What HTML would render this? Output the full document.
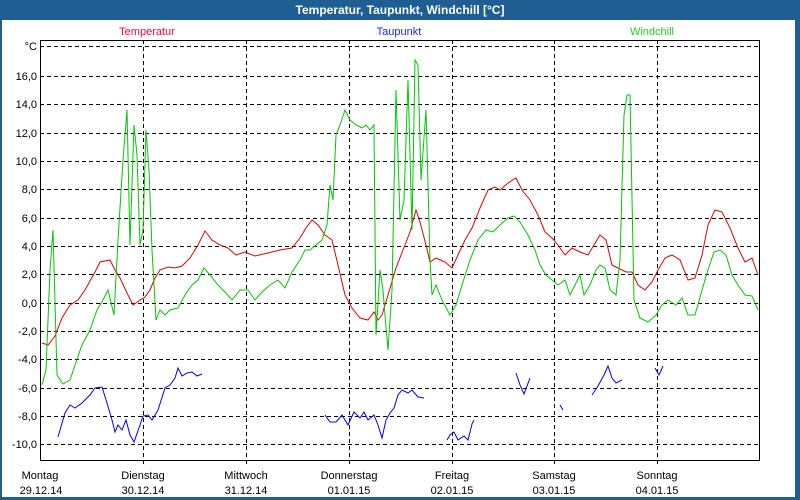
<!DOCTYPE html>
<html><head><meta charset="utf-8"><style>
body{margin:0;width:800px;height:500px;overflow:hidden;background:#1e5e93;font-family:"Liberation Sans",sans-serif}
#w{position:absolute;left:2px;top:20px;width:793px;height:477px;background:#fff}
#t{position:absolute;left:0;top:0;width:800px;height:20px;line-height:20px;text-align:center;color:#fff;font-weight:bold;font-size:12px}
text{font-family:"Liberation Sans",sans-serif;font-size:11px}
</style></head><body>
<div id="t">Temperatur, Taupunkt, Windchill [°C]</div>
<div id="w"></div>
<svg width="800" height="500" style="position:absolute;left:0;top:0">
<g stroke="#000" stroke-dasharray="4,3" stroke-width="1" fill="none">
<path d="M40 46.5H760M40 76.5H760M40 104.5H760M40 133.5H760M40 161.5H760M40 189.5H760M40 218.5H760M40 246.5H760M40 274.5H760M40 303.5H760M40 331.5H760M40 359.5H760M40 388.5H760M40 416.5H760M40 444.5H760"/>
<path d="M143.5 40V466M246.5 40V466M349.5 40V466M452.5 40V466M554.5 40V466M657.5 40V466"/>
</g>
<rect x="40.5" y="40.5" width="719" height="420" fill="none" stroke="#000"/>
<g font-size="11" text-anchor="end" fill="#000">
<text x="37" y="50">°C</text><text x="37" y="80">16,0</text><text x="37" y="108">14,0</text><text x="37" y="137">12,0</text><text x="37" y="165">10,0</text><text x="37" y="193">8,0</text><text x="37" y="222">6,0</text><text x="37" y="250">4,0</text><text x="37" y="278">2,0</text><text x="37" y="307">0,0</text><text x="37" y="335">-2,0</text><text x="37" y="363">-4,0</text><text x="37" y="392">-6,0</text><text x="37" y="420">-8,0</text><text x="37" y="448">-10,0</text>
</g>
<g text-anchor="middle" fill="#000">
<text x="40" y="479">Montag</text><text x="41" y="494">29.12.14</text>
<text x="143" y="479">Dienstag</text><text x="143" y="494">30.12.14</text>
<text x="246" y="479">Mittwoch</text><text x="246" y="494">31.12.14</text>
<text x="349" y="479">Donnerstag</text><text x="349" y="494">01.01.15</text>
<text x="452" y="479">Freitag</text><text x="452" y="494">02.01.15</text>
<text x="554" y="479">Samstag</text><text x="554" y="494">03.01.15</text>
<text x="657" y="479">Sonntag</text><text x="657" y="494">04.01.15</text>
<text x="147" y="35" fill="#ff0040">Temperatur</text>
<text x="399" y="35" fill="#2020ff">Taupunkt</text>
<text x="652" y="35" fill="#20d020">Windchill</text>
</g>
<polyline fill="none" stroke="#e00000" points="42,343 48,345 55,336 62,318 70,305 78,300 85,290 95,272 100,262 110,260 115,270 120,278 127,293 133,305 140,300 145,297 150,290 155,278 160,270 168,267 175,268 182,266 190,258 198,245 205,231 212,240 220,245 228,248 236,255 245,252 255,256 268,253 280,250 292,248 300,238 306,228 312,220 318,225 325,235 332,240 338,265 345,295 352,308 360,318 368,320 374,312 378,320 382,315 388,295 396,268 403,250 410,232 416,210 420,222 426,245 430,262 436,258 445,262 452,268 458,255 465,240 472,228 480,208 488,190 495,187 500,190 508,183 516,178 522,190 530,200 538,215 545,232 552,238 558,245 565,255 572,248 580,252 588,255 594,245 600,235 606,240 612,265 618,268 626,272 632,272 638,285 645,290 652,282 658,270 665,258 672,255 680,260 688,280 695,278 702,255 708,225 715,210 722,212 730,228 738,248 745,262 752,258 758,275"/>
<polyline fill="none" stroke="#00c800" points="42,385 46,370 50,270 53,230 57,375 63,384 70,380 75,365 82,345 90,330 97,310 103,300 108,290 114,315 118,240 123,160 127,110 130,245 134,125 137,155 140,245 143,230 146,130 149,170 152,250 156,320 160,310 165,315 170,310 178,308 185,295 192,285 198,280 204,268 210,275 218,285 225,292 232,300 240,290 248,290 255,300 262,292 270,285 278,280 285,288 292,272 300,260 305,250 310,250 316,245 322,240 327,225 330,185 333,200 336,135 340,125 345,110 350,120 356,125 362,128 366,125 370,130 374,125 376,335 380,270 383,290 385,315 388,350 392,290 396,90 400,220 404,200 408,80 412,230 415,60 418,65 421,180 426,110 430,260 432,295 436,285 442,300 450,315 456,305 462,285 470,260 478,240 486,230 493,232 500,225 508,218 514,216 520,222 528,235 535,250 540,265 546,275 552,280 558,285 565,280 570,295 575,285 580,275 584,295 590,285 596,270 600,265 605,268 610,290 616,295 620,260 624,115 627,95 630,95 634,300 640,318 648,322 656,315 662,305 668,300 676,305 682,298 688,315 695,315 702,290 708,270 714,252 720,250 726,255 732,275 738,285 745,295 752,296 758,310"/>
<g fill="none" stroke="#0000f0">
<polyline points="58,437 65,413 70,405 75,408 82,403 90,395 95,388 102,387 107,403 112,420 115,432 118,425 122,430 126,420 130,435 134,442 140,425 143,416 148,415 152,420 158,410 165,388 170,385 175,378 178,368 182,376 187,373 192,372 197,376 202,374"/>
<polyline points="325,415 330,422 336,422 342,415 348,425 354,412 360,418 364,412 368,420 374,415 378,425 382,438 386,420 390,413 394,408 398,395 402,390 408,393 412,390 418,397 424,398"/>
<polyline points="447,440 450,435 454,432 458,440 464,436 468,440 472,424 474,420"/>
<polyline points="516,373 520,385 524,394 530,378"/>
<polyline points="560,405 563,410"/>
<polyline points="592,395 598,386 604,375 608,366 612,378 616,383 622,380"/>
<polyline points="655,368 659,375 663,366"/>
</g>
</svg>
</body></html>
